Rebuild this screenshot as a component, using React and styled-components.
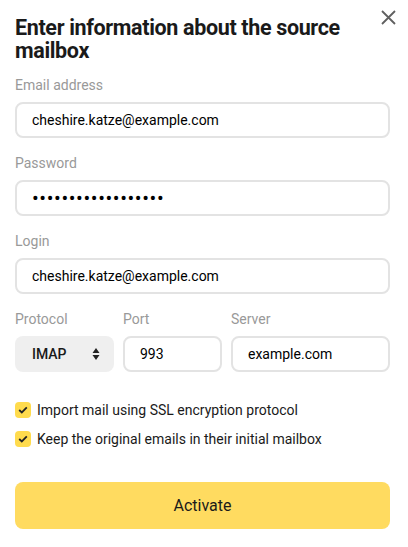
import styled, { createGlobalStyle } from "styled-components";

const GlobalStyle = createGlobalStyle`
  body {
    margin: 0;
    background: #fff;
    font-family: Roboto, "Liberation Sans", sans-serif;
    color: #000;
  }
`;

const CheckMark = () => (
  <svg width="10" height="8" viewBox="0 0 10 8">
    <path d="M1.2 4L3.8 6.4L8.8 1.4" stroke="#222" strokeWidth="1.8" fill="none" />
  </svg>
);

const App = () => {
  return (
    <>
      <GlobalStyle />
      <Modal>
        <Header>
          <Title>Enter information about the source mailbox</Title>
          <CloseButton aria-label="Close">
            <svg width="15" height="15" viewBox="0 0 15 15">
              <path d="M1 1L14 14M14 1L1 14" stroke="#606060" strokeWidth="1.8" />
            </svg>
          </CloseButton>
        </Header>

        <Field>
          <Label>Email address</Label>
          <Input defaultValue="cheshire.katze@example.com" readOnly />
        </Field>
        <Field>
          <Label>Password</Label>
          <Input type="password" defaultValue="cheshirekatzepass1" readOnly $secret />
        </Field>
        <Field>
          <Label>Login</Label>
          <Input defaultValue="cheshire.katze@example.com" readOnly />
        </Field>

        <ServerRow>
          <Field>
            <Label>Protocol</Label>
            <Select>
              IMAP
              <svg width="8" height="14" viewBox="0 0 8 14">
                <path d="M4 1L7.5 6H0.5Z M4 13L0.5 8H7.5Z" fill="#222" />
              </svg>
            </Select>
          </Field>
          <Field>
            <Label>Port</Label>
            <Input defaultValue="993" readOnly />
          </Field>
          <Field>
            <Label>Server</Label>
            <Input defaultValue="example.com" readOnly />
          </Field>
        </ServerRow>

        <Options>
          <Check>
            <Box>
              <CheckMark />
            </Box>
            Import mail using SSL encryption protocol
          </Check>
          <Check>
            <Box>
              <CheckMark />
            </Box>
            Keep the original emails in their initial mailbox
          </Check>
        </Options>

        <Activate>Activate</Activate>
      </Modal>
    </>
  );
};

export default App;

const Modal = styled.div`
  width: 408px;
  box-sizing: border-box;
  padding: 16px 18px 18px 15px;
  display: flex;
  flex-direction: column;
`;

const Header = styled.div`
  display: flex;
  align-items: flex-start;
  justify-content: space-between;
  margin-bottom: 14px;
`;

const Title = styled.h1`
  margin: 0;
  width: 345px;
  font-size: 21.5px;
  line-height: 23px;
  font-weight: 700;
  letter-spacing: -0.35px;
  color: #1a1a1a;
`;

const CloseButton = styled.button`
  border: 0;
  padding: 0;
  margin: -6px -6px 0 0;
  background: none;
  display: flex;
  cursor: pointer;
`;

const Field = styled.div`
  display: flex;
  flex-direction: column;
  gap: 8px;
  margin-bottom: 16px;
  min-width: 0;
`;

const Label = styled.div`
  font-size: 14px;
  line-height: 18px;
  color: #999;
`;

const Input = styled.input`
  height: 36px;
  box-sizing: border-box;
  width: 100%;
  border: 2px solid #e3e3e3;
  border-radius: 8px;
  padding: 0 15px;
  font-family: inherit;
  font-size: ${(p) => (p.$secret ? "20px" : "14px")};
  letter-spacing: ${(p) => (p.$secret ? "0.6px" : "0")};
  color: #000;
  outline: none;
`;

const ServerRow = styled.div`
  display: grid;
  grid-template-columns: 99px 99px 1fr;
  gap: 9px;
  & > div {
    margin-bottom: 0;
  }
`;

const Select = styled.div`
  height: 36px;
  box-sizing: border-box;
  border-radius: 8px;
  background: #efefef;
  padding: 0 14px 0 17px;
  display: flex;
  align-items: center;
  justify-content: space-between;
  font-size: 14px;
  font-weight: 500;
  color: #1a1a1a;
`;

const Options = styled.div`
  display: flex;
  flex-direction: column;
  gap: 9px;
  margin-top: 28px;
`;

const Check = styled.label`
  display: flex;
  align-items: center;
  gap: 6px;
  font-size: 14px;
  line-height: 20px;
  color: #1a1a1a;
`;

const Box = styled.span`
  width: 16px;
  height: 16px;
  border-radius: 4px;
  background: #ffdb4d;
  display: flex;
  align-items: center;
  justify-content: center;
  flex-shrink: 0;
`;

const Activate = styled.button`
  margin-top: 33px;
  height: 47px;
  border: 0;
  border-radius: 8px;
  background: #ffdb60;
  font-family: inherit;
  font-size: 16px;
  color: #1a1a1a;
  cursor: pointer;
`;
